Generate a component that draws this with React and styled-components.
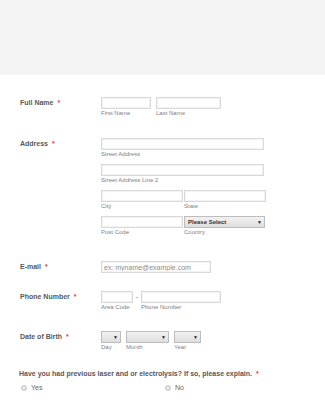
import styled, { createGlobalStyle } from "styled-components";

const Global = createGlobalStyle`
  body {
    margin: 0;
    background: #fff;
    font-family: "Liberation Sans", Arial, sans-serif;
    color: #555;
  }
`;

const Header = styled.div`
  height: 75px;
  background: #f4f4f4;
`;

const Form = styled.form`
  padding: 0 0 0 20px;
`;

const Row = styled.div`
  display: flex;
  margin-top: ${(p) => p.$top}px;
`;

const Label = styled.div`
  width: 81px;
  flex: none;
  font-size: 7px;
  font-weight: bold;
  line-height: 12px;
  color: #585858;
`;

const Star = styled.span`
  color: #e5413a;
  margin-left: 4px;
`;

const Fields = styled.div`
  display: flex;
  flex-direction: column;
  gap: 6px;
`;

const Line = styled.div`
  display: flex;
  gap: ${(p) => p.$gap ?? 1}px;
`;

const Cell = styled.div`
  display: flex;
  flex-direction: column;
  width: ${(p) => p.$w}px;
`;

const Input = styled.input`
  box-sizing: border-box;
  width: 100%;
  height: 12px;
  margin: 0;
  padding: 0 2px;
  border: 1px solid #d9d9d9;
  box-shadow: inset 0 0 0 1px #f3f3f3;
  background: #fff;
  font-family: "Liberation Sans", Arial, sans-serif;
  font-size: 7px;
  color: #888;
  outline: none;
  &::placeholder {
    color: #8c8c8c;
  }
`;

const Sub = styled.div`
  font-size: 6px;
  line-height: 8px;
  color: #808080;
`;

const Select = styled.div`
  box-sizing: border-box;
  width: 100%;
  height: 12px;
  display: flex;
  align-items: center;
  justify-content: space-between;
  padding: 0 2px 0 3px;
  border: 1px solid #bdbdbd;
  background: linear-gradient(#f2f2f2, #dedede);
  font-size: 6px;
  font-weight: bold;
  color: #333;
`;

const Arrow = styled.span`
  font-size: 5px;
  color: #222;
`;

const Dash = styled.div`
  width: 8px;
  text-align: center;
  font-size: 7px;
  line-height: 12px;
  color: #777;
`;

const Question = styled.div`
  margin-top: 18px;
  font-size: 7px;
  font-weight: bold;
  color: #585858;
  line-height: 10px;
  margin-left: -1px;
`;

const Options = styled.div`
  display: grid;
  grid-template-columns: 144px 1fr;
  margin-top: 5px;
  margin-left: 1px;
`;

const Option = styled.label`
  display: flex;
  align-items: center;
  gap: 4px;
  font-size: 7px;
  color: #666;
`;

const Radio = styled.span`
  box-sizing: border-box;
  width: 6px;
  height: 6px;
  border-radius: 50%;
  border: 1px solid #c4c4c4;
  background: radial-gradient(#f3f3f3, #d6d6d6);
`;

function Drop({ text }) {
  return (
    <Select>
      <span>{text}</span>
      <Arrow>▼</Arrow>
    </Select>
  );
}

export default function App() {
  return (
    <>
      <Global />
      <Header />
      <Form>
        <Row $top={22}>
          <Label>
            Full Name<Star>*</Star>
          </Label>
          <Line $gap={5}>
            <Cell $w={50}>
              <Input />
              <Sub>First Name</Sub>
            </Cell>
            <Cell $w={65}>
              <Input />
              <Sub>Last Name</Sub>
            </Cell>
          </Line>
        </Row>

        <Row $top={21}>
          <Label>
            Address<Star>*</Star>
          </Label>
          <Fields>
            <Cell $w={163}>
              <Input />
              <Sub>Street Address</Sub>
            </Cell>
            <Cell $w={163}>
              <Input />
              <Sub>Street Address Line 2</Sub>
            </Cell>
            <Line>
              <Cell $w={82}>
                <Input />
                <Sub>City</Sub>
              </Cell>
              <Cell $w={82}>
                <Input />
                <Sub>State</Sub>
              </Cell>
            </Line>
            <Line>
              <Cell $w={82}>
                <Input />
                <Sub>Post Code</Sub>
              </Cell>
              <Cell $w={81}>
                <Drop text="Please Select" />
                <Sub>Country</Sub>
              </Cell>
            </Line>
          </Fields>
        </Row>

        <Row $top={25}>
          <Label>
            E-mail<Star>*</Star>
          </Label>
          <Cell $w={110}>
            <Input placeholder="ex: myname@example.com" />
          </Cell>
        </Row>

        <Row $top={18}>
          <Label>
            Phone Number<Star>*</Star>
          </Label>
          <Line $gap={0}>
            <Cell $w={32}>
              <Input />
              <Sub>Area Code</Sub>
            </Cell>
            <Dash>-</Dash>
            <Cell $w={80}>
              <Input />
              <Sub>Phone Number</Sub>
            </Cell>
          </Line>
        </Row>

        <Row $top={20}>
          <Label>
            Date of Birth<Star>*</Star>
          </Label>
          <Line $gap={5}>
            <Cell $w={20}>
              <Drop text="" />
              <Sub>Day</Sub>
            </Cell>
            <Cell $w={43}>
              <Drop text="" />
              <Sub>Month</Sub>
            </Cell>
            <Cell $w={27}>
              <Drop text="" />
              <Sub>Year</Sub>
            </Cell>
          </Line>
        </Row>

        <Question>
          Have you had previous laser and or electrolysis? If so, please explain.
          <Star>*</Star>
        </Question>
        <Options>
          <Option>
            <Radio />
            Yes
          </Option>
          <Option>
            <Radio />
            No
          </Option>
        </Options>
      </Form>
    </>
  );
}
